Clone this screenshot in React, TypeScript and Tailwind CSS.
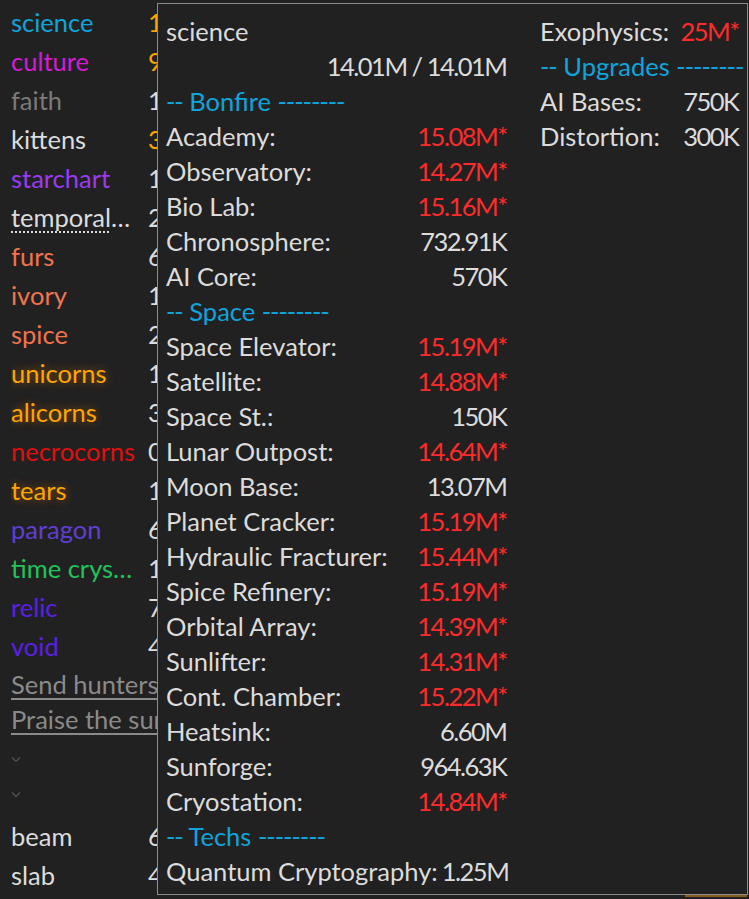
import React from 'react';

type Res = { name: string; color: string; value: string; vcolor?: string; glow?: boolean; dotted?: boolean };

const resources: Res[] = [
  { name: 'science', color: 'text-[#0ea5dc]', value: '14.01M', vcolor: 'text-[#ffa500]' },
  { name: 'culture', color: 'text-[#d41ad4]', value: '9.52K', vcolor: 'text-[#ffa500]' },
  { name: 'faith', color: 'text-[#7a7a7a]', value: '1.02M' },
  { name: 'kittens', color: 'text-[#dcdcdc]', value: '392', vcolor: 'text-[#ffa500]' },
  { name: 'starchart', color: 'text-[#9a3bf2]', value: '1.34M' },
  { name: 'temporal', color: 'text-[#dcdcdc]', value: '2.87K', dotted: true },
  { name: 'furs', color: 'text-[#f2744f]', value: '6.12M' },
  { name: 'ivory', color: 'text-[#f2744f]', value: '1.45M' },
  { name: 'spice', color: 'text-[#f2744f]', value: '2.31M' },
  { name: 'unicorns', color: 'text-[#ffa500]', value: '1.77M', glow: true },
  { name: 'alicorns', color: 'text-[#ffa500]', value: '3.04K', glow: true },
  { name: 'necrocorns', color: 'text-[#e00f0f]', value: '0.95K' },
  { name: 'tears', color: 'text-[#ffa500]', value: '1.21K', glow: true },
  { name: 'paragon', color: 'text-[#5f3fd6]', value: '6.08K' },
  { name: 'time crystal', color: 'text-[#21c45a]', value: '1.63K' },
  { name: 'relic', color: 'text-[#5b1fe6]', value: '7.40K' },
  { name: 'void', color: 'text-[#5b1fe6]', value: '4.12K' },
];

const craftables: Res[] = [
  { name: 'beam', color: 'text-[#dcdcdc]', value: '6.53M' },
  { name: 'slab', color: 'text-[#dcdcdc]', value: '4.88M' },
];

type Row = { label: string; value?: string; red?: boolean; header?: boolean; right?: boolean };

const leftRows: Row[] = [
  { label: 'science' },
  { label: '14.01M / 14.01M', right: true },
  { label: 'Bonfire', header: true },
  { label: 'Academy:', value: '15.08M*', red: true },
  { label: 'Observatory:', value: '14.27M*', red: true },
  { label: 'Bio Lab:', value: '15.16M*', red: true },
  { label: 'Chronosphere:', value: '732.91K' },
  { label: 'AI Core:', value: '570K' },
  { label: 'Space', header: true },
  { label: 'Space Elevator:', value: '15.19M*', red: true },
  { label: 'Satellite:', value: '14.88M*', red: true },
  { label: 'Space St.:', value: '150K' },
  { label: 'Lunar Outpost:', value: '14.64M*', red: true },
  { label: 'Moon Base:', value: '13.07M' },
  { label: 'Planet Cracker:', value: '15.19M*', red: true },
  { label: 'Hydraulic Fracturer:', value: '15.44M*', red: true },
  { label: 'Spice Refinery:', value: '15.19M*', red: true },
  { label: 'Orbital Array:', value: '14.39M*', red: true },
  { label: 'Sunlifter:', value: '14.31M*', red: true },
  { label: 'Cont. Chamber:', value: '15.22M*', red: true },
  { label: 'Heatsink:', value: '6.60M' },
  { label: 'Sunforge:', value: '964.63K' },
  { label: 'Cryostation:', value: '14.84M*', red: true },
  { label: 'Techs', header: true },
  { label: 'Quantum Cryptography:', value: '1.25M' },
];

const rightRows: Row[] = [
  { label: 'Exophysics:', value: '25M*', red: true },
  { label: 'Upgrades', header: true },
  { label: 'AI Bases:', value: '750K' },
  { label: 'Distortion:', value: '300K' },
];

function TipRow({ row }: { row: Row }) {
  if (row.header)
    return (
      <div className="h-[35px] text-[#0ea5dc] whitespace-nowrap">
        <span className="tracking-[-1.1px]">--</span> {row.label} <span className="tracking-[-1.1px]">--------</span>
      </div>
    );
  if (row.right)
    return <div className="h-[35px] text-right whitespace-nowrap tracking-[-1.5px] pr-[1.5px]">{row.label}</div>;
  return (
    <div className="h-[35px] flex justify-between gap-[4px] whitespace-nowrap">
      <span>{row.label}</span>
      {row.value && (
        <span className={'tracking-[-1.5px] mr-[1.5px] ' + (row.red ? 'text-[#ff2b2b]' : '')}>{row.value}</span>
      )}
    </div>
  );
}

function ResRow({ r }: { r: Res }) {
  return (
    <div className="h-[39px] flex items-center">
      <div className={`w-[127px] overflow-hidden text-ellipsis whitespace-nowrap ${r.color}`}>
        <span
          className={
            (r.glow ? '[text-shadow:0_0_10px_rgba(255,140,0,0.55)] ' : '') +
            (r.dotted ? 'underline decoration-dotted decoration-2 underline-offset-4' : '')
          }
        >
          {r.name}
        </span>
        {r.dotted && <span>…</span>}
      </div>
      <div className={`ml-[10px] ${r.vcolor ?? 'text-[#dcdcdc]'}`}>{r.value}</div>
    </div>
  );
}

function Chevron() {
  return (
    <div className="h-[35px] flex items-center">
      <svg width="10" height="7" viewBox="0 0 10 7">
        <path d="M1 1.5l4 4 4-4" fill="none" stroke="#555" strokeWidth="1.2" />
      </svg>
    </div>
  );
}

export default function App() {
  return (
    <div
      className="relative w-[749px] h-[899px] overflow-hidden bg-[#212121] text-[25.5px] leading-[35px] text-[#dcdcdc]"
      style={{ fontFamily: 'Lato, "Noto Sans", sans-serif' }}
    >
      <div className="pl-[11px] pt-[3px] flex flex-col">
        {resources.map((r) => (
          <ResRow key={r.name} r={r} />
        ))}
        <div className="h-[35px] mt-[1px] text-[#8a8a8a] underline underline-offset-4 whitespace-nowrap">Send hunters (12)</div>
        <div className="h-[35px] text-[#8a8a8a] underline underline-offset-4 whitespace-nowrap">Praise the sun!</div>
        <div className="mt-[5px]">
          <Chevron />
          <Chevron />
        </div>
        <div className="mt-[5px]">
          {craftables.map((r) => (
            <ResRow key={r.name} r={r} />
          ))}
        </div>
      </div>

      {/* tooltip */}
      <div className="absolute left-[157px] top-[3px] w-[591px] h-[892px] border border-[#8c8c8c] bg-[#212121] pl-[8px] pt-[10px] flex gap-[32px]">
        <div className="w-[342px] flex flex-col">
          {leftRows.map((row, i) => (
            <TipRow key={i} row={row} />
          ))}
        </div>
        <div className="w-[200px] flex flex-col">
          {rightRows.map((row, i) => (
            <TipRow key={i} row={row} />
          ))}
        </div>
      </div>
      <div className="absolute left-[685px] top-[895px] w-[62px] h-[2px] bg-[#8a5a1a]" />
    </div>
  );
}
